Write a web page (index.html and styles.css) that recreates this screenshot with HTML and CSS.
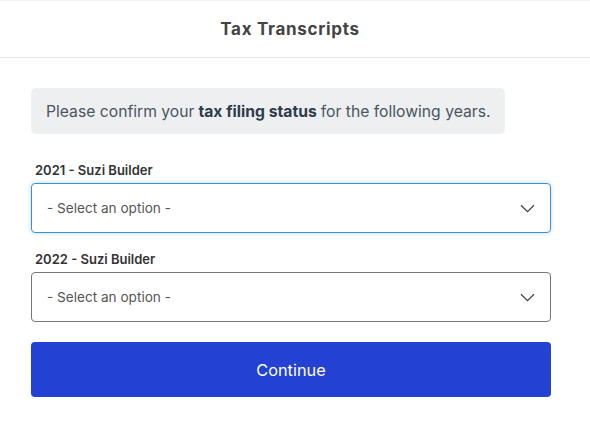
FILE: index.html
```html
<!DOCTYPE html>
<html>
<head>
<meta charset="utf-8">
<link rel="stylesheet" href="styles.css">
</head>
<body>
<header class="header"><h1 class="title">Tax Transcripts</h1></header>
<main class="content">
  <div class="notice">Please confirm your <strong>tax filing status</strong> for the following years.</div>
  <div class="field">
    <label class="label">2021 - Suzi Builder</label>
    <div class="select focused">
      <span class="placeholder">- Select an option -</span>
      <svg class="chevron" width="15" height="9" viewBox="0 0 15 9"><path d="M1 1.2l6.5 6.5 6.5-6.5" fill="none" stroke="#444" stroke-width="1.3"/></svg>
    </div>
  </div>
  <div class="field">
    <label class="label">2022 - Suzi Builder</label>
    <div class="select">
      <span class="placeholder">- Select an option -</span>
      <svg class="chevron" width="15" height="9" viewBox="0 0 15 9"><path d="M1 1.2l6.5 6.5 6.5-6.5" fill="none" stroke="#444" stroke-width="1.3"/></svg>
    </div>
  </div>
  <button class="btn">Continue</button>
</main>
</body>
</html>
```
FILE: styles.css
```css
* { box-sizing: border-box; }
body {
  margin: 0;
  background: #fff;
  font-family: Inter, "Liberation Sans", sans-serif;
  color: #333;
}
.header {
  height: 58px;
  border-top: 1px solid #f2f2f2;
  border-bottom: 1px solid #e6e6e6;
  display: flex;
  align-items: center;
  justify-content: center;
  padding-right: 10px;
}
.title {
  margin: 0;
  font-size: 17px;
  font-weight: 700;
  letter-spacing: 0.7px;
  color: #444;
}
.content {
  padding: 30px 39px 0 31px;
  display: flex;
  flex-direction: column;
  align-items: flex-start;
}
.notice {
  background: #eeeff1;
  border-radius: 5px;
  height: 46px;
  display: flex;
  align-items: center;
  padding: 0 15px;
  font-size: 15.7px;
  color: #4a5560;
}
.notice strong {
  font-weight: 700;
  color: #2f3d4a;
  margin: 0 4px;
}
.field {
  width: 100%;
  display: flex;
  flex-direction: column;
  margin-top: 27px;
}
.field + .field { margin-top: 17px; }
.label {
  font-size: 13px;
  font-weight: 600;
  color: #333;
  padding-left: 4px;
  line-height: 18px;
  margin-bottom: 4px;
}
.select {
  height: 50px;
  border: 1px solid #777;
  border-radius: 4px;
  display: flex;
  align-items: center;
  justify-content: space-between;
  padding: 0 15px 0 15px;
}
.select.focused {
  border-color: #3d8fdc;
  box-shadow: 0 0 4px rgba(61, 143, 220, 0.35);
}
.placeholder {
  font-size: 13.6px;
  color: #555;
}
.btn {
  margin-top: 20px;
  width: 100%;
  height: 55px;
  border: none;
  border-radius: 4px;
  background: #2342d3;
  color: #fff;
  font-family: inherit;
  font-size: 16.3px;
}
```
